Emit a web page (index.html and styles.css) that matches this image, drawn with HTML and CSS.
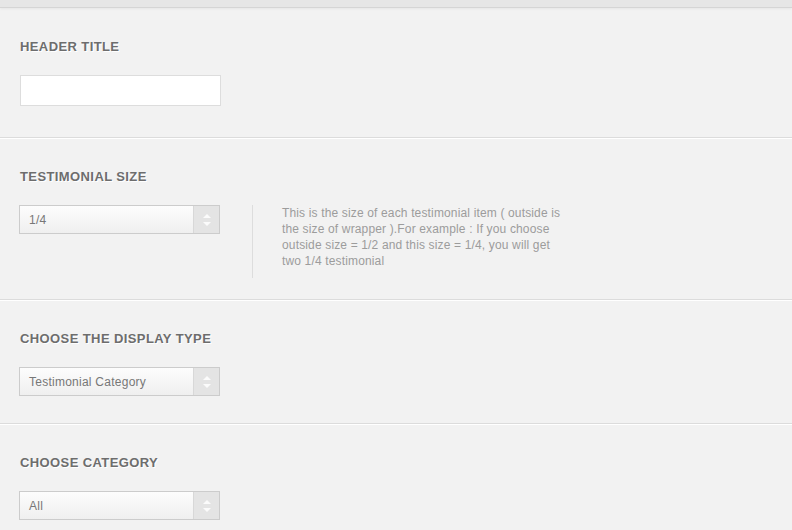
FILE: index.html
```html
<!DOCTYPE html>
<html>
<head>
<meta charset="utf-8">
<link rel="stylesheet" href="styles.css">
</head>
<body>
<div class="topbar"></div>
<div class="section section-first">
  <div class="label">HEADER TITLE</div>
  <div class="text-input"></div>
</div>
<div class="section">
  <div class="label">TESTIMONIAL SIZE</div>
  <div class="row">
    <div class="select"><span class="value">1/4</span><span class="arrows"><svg width="10" height="14" viewBox="0 0 10 14"><path d="M1 5 L5 1 L9 5 Z" fill="#fbfbfb"/><path d="M1 9 L5 13 L9 9 Z" fill="#fbfbfb"/></svg></span></div>
    <div class="desc">This is the size of each testimonial item ( outside is the size of wrapper ).For example : If you choose outside size = 1/2 and this size = 1/4, you will get two 1/4 testimonial</div>
  </div>
</div>
<div class="section">
  <div class="label">CHOOSE THE DISPLAY TYPE</div>
  <div class="select"><span class="value">Testimonial Category</span><span class="arrows"><svg width="10" height="14" viewBox="0 0 10 14"><path d="M1 5 L5 1 L9 5 Z" fill="#fbfbfb"/><path d="M1 9 L5 13 L9 9 Z" fill="#fbfbfb"/></svg></span></div>
</div>
<div class="section">
  <div class="label">CHOOSE CATEGORY</div>
  <div class="select"><span class="value">All</span><span class="arrows"><svg width="10" height="14" viewBox="0 0 10 14"><path d="M1 5 L5 1 L9 5 Z" fill="#fbfbfb"/><path d="M1 9 L5 13 L9 9 Z" fill="#fbfbfb"/></svg></span></div>
</div>
</body>
</html>
```
FILE: styles.css
```css
html, body {
  margin: 0;
  padding: 0;
  background: #f2f2f2;
  font-family: "Liberation Sans", Arial, sans-serif;
  overflow: hidden;
}
.topbar {
  height: 7px;
  background: #e6e6e6;
  border-bottom: 1px solid #d5d5d5;
  box-shadow: 0 1px 3px rgba(0, 0, 0, 0.05);
  position: relative;
}
.section {
  padding: 30px 19px 21px;
  border-bottom: 1px solid #dcdcdc;
}
.section + .section {
  border-top: 1px solid #ffffff;
}
.section-first {
  padding-top: 31px;
}
.label {
  font-size: 13px;
  line-height: 16px;
  font-weight: bold;
  letter-spacing: 0.4px;
  color: #6d6d6d;
  text-shadow: 1px 1px 0 #ffffff;
  margin: 0 0 20px 1px;
}
.text-input {
  width: 199px;
  height: 29px;
  background: #ffffff;
  border: 1px solid #dddddd;
  margin: 0 0 10px 1px;
}
.row {
  display: flex;
  align-items: flex-start;
}
.select {
  width: 199px;
  height: 27px;
  border: 1px solid #cccccc;
  background: linear-gradient(#fdfdfd, #efefef);
  display: flex;
  align-items: center;
  margin-bottom: 6px;
  flex-shrink: 0;
}
.value {
  flex: 1;
  padding-left: 9px;
  font-size: 12px;
  letter-spacing: 0.25px;
  color: #777777;
}
.arrows {
  width: 25px;
  height: 27px;
  background: #e4e4e4;
  border-left: 1px solid #d8d8d8;
  display: flex;
  align-items: center;
  justify-content: center;
}
.desc {
  margin-left: 32px;
  width: 282px;
  border-left: 1px solid #dddddd;
  padding: 0 0 9px 29px;
  font-size: 12px;
  line-height: 16px;
  letter-spacing: 0.15px;
  color: #9c9c9c;
}
```
